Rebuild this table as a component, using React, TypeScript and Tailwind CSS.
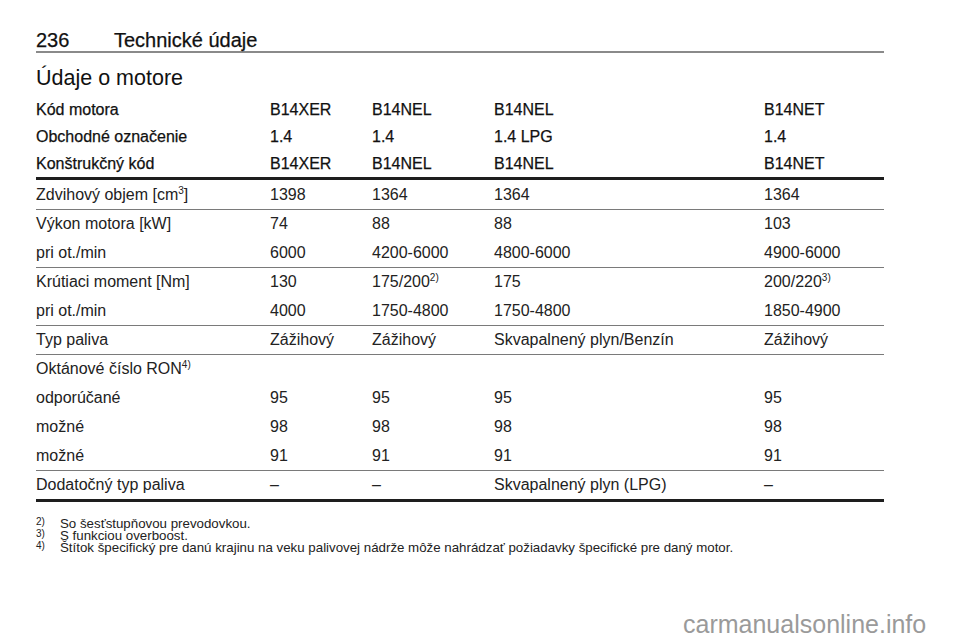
import React from "react";

const font = { fontFamily: '"Liberation Sans", Arial, sans-serif' };

type Cell = React.ReactNode;

const Sup = ({ children }: { children: React.ReactNode }) => (
  <span className="relative -top-[6px] text-[10px] leading-none">{children}</span>
);

function Row({ cells, head = false, border = "" }: { cells: Cell[]; head?: boolean; border?: string }) {
  return (
    <div
      className={`grid grid-cols-[234px_102px_122px_270px_120px] items-center ${
        head ? "h-[27px] text-[#111] [-webkit-text-stroke:0.25px_#111]" : "h-[29px] text-[#222]"
      } ${border}`}
    >
      {cells.map((c, i) => (
        <div key={i} className="whitespace-nowrap">
          {c}
        </div>
      ))}
    </div>
  );
}

export default function App() {
  const thin = "border-t border-[#7a7a7a]";
  return (
    <div className="relative w-[960px] h-[642px] bg-white overflow-hidden" style={font}>
      <div className="pl-[36px] w-[884px]">
        <div className="pt-[29px]">
          <div className="flex text-[20px] leading-[22px] text-[#111] [-webkit-text-stroke:0.25px_#111] border-b-2 border-[#8a8a8a]">
            <span className="w-[78px]">236</span>
            <span>Technické údaje</span>
          </div>
        </div>
        <div className="mt-[12px] text-[21.5px] leading-[26px] text-[#111]">Údaje o motore</div>
        <div className="mt-[5px] text-[16px] leading-[18px]">
          <Row head cells={["Kód motora", "B14XER", "B14NEL", "B14NEL", "B14NET"]} />
          <Row head cells={["Obchodné označenie", "1.4", "1.4", "1.4 LPG", "1.4"]} />
          <Row head cells={["Konštrukčný kód", "B14XER", "B14NEL", "B14NEL", "B14NET"]} />
          <div className="border-t-[3px] border-[#1e1e1e]" />
          <Row
            cells={[
              <>
                Zdvihový objem [cm<Sup>3</Sup>]
              </>,
              "1398",
              "1364",
              "1364",
              "1364",
            ]}
          />
          <Row border={thin} cells={["Výkon motora [kW]", "74", "88", "88", "103"]} />
          <Row cells={["pri ot./min", "6000", "4200-6000", "4800-6000", "4900-6000"]} />
          <Row
            border={thin}
            cells={[
              "Krútiaci moment [Nm]",
              "130",
              <>
                175/200<Sup>2)</Sup>
              </>,
              "175",
              <>
                200/220<Sup>3)</Sup>
              </>,
            ]}
          />
          <Row cells={["pri ot./min", "4000", "1750-4800", "1750-4800", "1850-4900"]} />
          <Row border={thin} cells={["Typ paliva", "Zážihový", "Zážihový", "Skvapalnený plyn/Benzín", "Zážihový"]} />
          <Row
            border={thin}
            cells={[
              <>
                Oktánové číslo RON<Sup>4)</Sup>
              </>,
              "",
              "",
              "",
              "",
            ]}
          />
          <Row cells={["odporúčané", "95", "95", "95", "95"]} />
          <Row cells={["možné", "98", "98", "98", "98"]} />
          <Row cells={["možné", "91", "91", "91", "91"]} />
          <Row border={thin} cells={["Dodatočný typ paliva", "–", "–", "Skvapalnený plyn (LPG)", "–"]} />
          <div className="border-t-[3px] border-[#1e1e1e]" />
        </div>
        <div className="mt-[16px] text-[13.3px] leading-[12px] text-[#222]">
          {[
            ["2)", "So šesťstupňovou prevodovkou."],
            ["3)", "S funkciou overboost."],
            ["4)", "Štítok špecifický pre danú krajinu na veku palivovej nádrže môže nahrádzať požiadavky špecifické pre daný motor."],
          ].map(([n, t]) => (
            <div key={n} className="flex">
              <span className="w-[24px] text-[10px] relative -top-[2px]">{n}</span>
              <span className="whitespace-nowrap">{t}</span>
            </div>
          ))}
        </div>
      </div>
      <div className="absolute left-[683px] top-[610px] text-[25px] leading-[28px] text-[#9a9a9a]">
        carmanualsonline.info
      </div>
    </div>
  );
}
